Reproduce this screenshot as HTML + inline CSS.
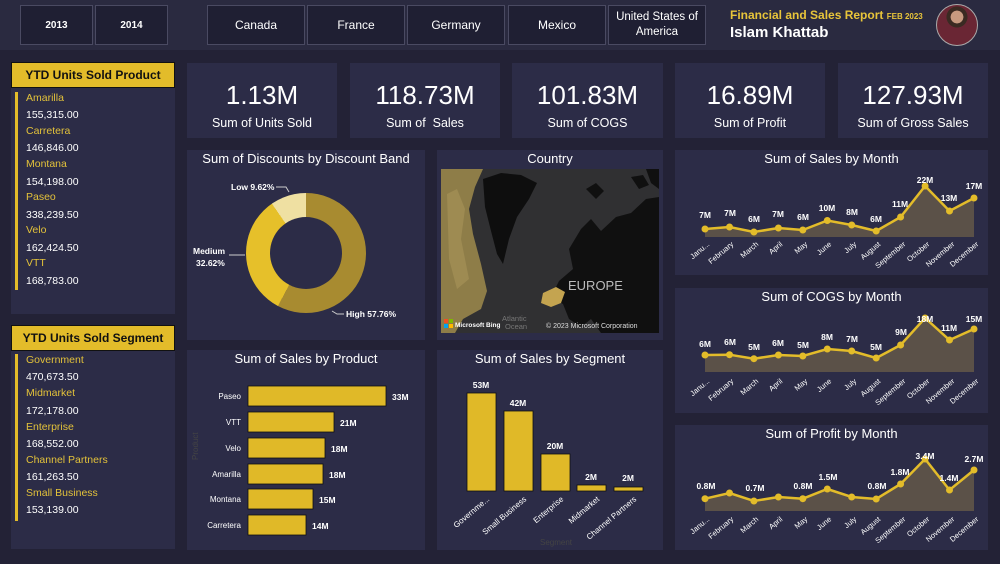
<!DOCTYPE html>
<html><head><meta charset="utf-8"><style>
*{margin:0;padding:0;box-sizing:border-box}
body{width:1000px;height:564px;background:#232236;font-family:"Liberation Sans","DejaVu Sans",sans-serif;position:relative;overflow:hidden;color:#fff}
.a{position:absolute}
.hdr{left:0;top:0;width:1000px;height:50px;background:#2a2a40}
.btn{position:absolute;border:1px solid #4a4a62;background:#1f1f33;color:#fff;display:flex;align-items:center;justify-content:center;text-align:center;font-size:12px;line-height:15px}
.yr{font-weight:bold;font-size:10px}
.p{position:absolute;background:#2c2c47}
.kv{position:absolute;left:0;right:0;text-align:center;top:17px;font-size:26px;color:#fff}
.kl{position:absolute;left:0;right:0;text-align:center;top:53px;font-size:12.5px;color:#fff}
.ttl{position:absolute;left:0;right:0;text-align:center;top:1px;font-size:13px;color:#fff}
.yh{position:absolute;background:#e3bc2a;color:#111;font-weight:bold;font-size:12px;display:flex;align-items:center;justify-content:center;border:1px solid #111}
.li{position:absolute;left:26px;font-size:10.5px}
.nm{color:#e3c23a}
</style></head><body>
<div class="a hdr"></div>
<div class="btn yr" style="left:20px;top:5px;width:73px;height:40px">2013</div>
<div class="btn yr" style="left:95px;top:5px;width:73px;height:40px">2014</div>
<div class="btn" style="left:207px;top:5px;width:98px;height:40px">Canada</div>
<div class="btn" style="left:307px;top:5px;width:98px;height:40px">France</div>
<div class="btn" style="left:407px;top:5px;width:98px;height:40px">Germany</div>
<div class="btn" style="left:508px;top:5px;width:98px;height:40px">Mexico</div>
<div class="btn" style="left:608px;top:5px;width:98px;height:40px;font-size:11.5px">United States of<br>America</div>
<div class="a" style="left:730px;top:8px;font-size:12px;font-weight:bold;color:#e8c53a">Financial and Sales Report <span style="font-size:8px">FEB 2023</span></div>
<div class="a" style="left:730px;top:24px;font-size:15px;font-weight:bold;color:#fff">Islam Khattab</div>
<div class="a" style="left:936px;top:4px;width:42px;height:42px;border-radius:50%;background:radial-gradient(circle at 50% 30%,#c79a80 0 18%,#3a2a22 19% 30%,#6a2634 31%);border:1px solid #aaa"></div>

<div class="p" style="left:11px;top:62px;width:164px;height:252px"></div>
<div class="yh" style="left:11px;top:62px;width:164px;height:26px">YTD Units Sold Product</div>
<div class="a" style="left:15px;top:92px;width:3px;height:198px;background:#e3bc2a"></div>
<div class="li nm" style="top:92px">Amarilla</div><div class="li" style="top:109px">155,315.00</div>
<div class="li nm" style="top:125px">Carretera</div><div class="li" style="top:142px">146,846.00</div>
<div class="li nm" style="top:158px">Montana</div><div class="li" style="top:176px">154,198.00</div>
<div class="li nm" style="top:191px">Paseo</div><div class="li" style="top:209px">338,239.50</div>
<div class="li nm" style="top:224px">Velo</div><div class="li" style="top:242px">162,424.50</div>
<div class="li nm" style="top:257px">VTT</div><div class="li" style="top:275px">168,783.00</div>

<div class="p" style="left:11px;top:325px;width:164px;height:224px"></div>
<div class="yh" style="left:11px;top:325px;width:164px;height:26px">YTD Units Sold Segment</div>
<div class="a" style="left:15px;top:354px;width:3px;height:167px;background:#e3bc2a"></div>
<div class="li nm" style="top:354px">Government</div><div class="li" style="top:371px">470,673.50</div>
<div class="li nm" style="top:387px">Midmarket</div><div class="li" style="top:405px">172,178.00</div>
<div class="li nm" style="top:421px">Enterprise</div><div class="li" style="top:438px">168,552.00</div>
<div class="li nm" style="top:454px">Channel Partners</div><div class="li" style="top:471px">161,263.50</div>
<div class="li nm" style="top:487px">Small Business</div><div class="li" style="top:504px">153,139.00</div>

<div class="p" style="left:187px;top:63px;width:150px;height:75px"><div class="kv">1.13M</div><div class="kl">Sum of Units Sold</div></div>
<div class="p" style="left:350px;top:63px;width:150px;height:75px"><div class="kv">118.73M</div><div class="kl">Sum of &nbsp;Sales</div></div>
<div class="p" style="left:512px;top:63px;width:151px;height:75px"><div class="kv">101.83M</div><div class="kl">Sum of COGS</div></div>
<div class="p" style="left:675px;top:63px;width:150px;height:75px"><div class="kv">16.89M</div><div class="kl">Sum of Profit</div></div>
<div class="p" style="left:838px;top:63px;width:150px;height:75px"><div class="kv">127.93M</div><div class="kl">Sum of Gross Sales</div></div>

<div class="p" style="left:187px;top:150px;width:238px;height:190px"><div class="ttl">Sum of Discounts by Discount Band</div></div>
<div class="a" style="left:246px;top:193px;width:120px;height:120px;border-radius:50%;background:conic-gradient(#a88b30 0 57.76%,#e6c02a 57.76% 90.38%,#efe0a2 90.38% 100%)"></div>
<div class="a" style="left:270px;top:217px;width:72px;height:72px;border-radius:50%;background:#2c2c47"></div>
<svg class="a" style="left:0;top:0" width="1000" height="564">
<g stroke="#ccc" stroke-width="1" fill="none"><path d="M276 187h10l3 5"/><path d="M229 255h16"/><path d="M332 311l5 3h7"/></g>
<g fill="#fff" font-size="8.5" font-weight="bold" font-family="Liberation Sans,sans-serif">
<text x="231" y="190">Low 9.62%</text><text x="193" y="254">Medium</text><text x="196" y="266">32.62%</text><text x="346" y="317">High 57.76%</text></g>
</svg>

<div class="p" style="left:437px;top:150px;width:226px;height:190px"><div class="ttl">Country</div></div>
<svg class="a" style="left:441px;top:169px" width="218" height="164">
<rect width="218" height="164" fill="#303032"/>
<path d="M0 0H42L34 18 28 40 32 65 40 95 46 122 40 140 22 150 14 164H0Z" fill="#8e7d48"/>
<path d="M6 25l10-5 8 20-4 30 8 40-12 10-8-30z" fill="#a8955a" opacity=".6"/>
<path d="M42 10 60 4 80 6 96 14 88 30 76 48 68 70 62 95 56 85 50 62 44 38Z" fill="#0e0e0e"/>
<path d="M140 60 150 50 160 62 175 48 190 44 205 30 218 28V164H160L150 150 140 158 128 150 122 135 110 128 118 112 132 100 128 80Z" fill="#101010"/>
<path d="M145 20l10-6 8 8-8 8z M190 8l12 -2 6 10-10 4z M205 0h13v20l-8-6z" fill="#101010"/>
<path d="M102 124 115 118 124 123 120 134 110 138 100 134Z" fill="#c4a450"/>
<text x="127" y="121" fill="#bbb" font-size="13" font-family="Liberation Sans,sans-serif">EUROPE</text>
<text x="61" y="152" fill="#777" font-size="7.5" font-family="Liberation Sans,sans-serif">Atlantic</text>
<text x="64" y="160" fill="#777" font-size="7.5" font-family="Liberation Sans,sans-serif">Ocean</text>
<rect x="3" y="150" width="4" height="4" fill="#f25022"/><rect x="8" y="150" width="4" height="4" fill="#7fba00"/><rect x="3" y="155" width="4" height="4" fill="#00a4ef"/><rect x="8" y="155" width="4" height="4" fill="#ffb900"/>
<text x="14" y="158" fill="#fff" font-size="6.5" font-weight="bold" font-family="Liberation Sans,sans-serif">Microsoft Bing</text>
<text x="105" y="159" fill="#ddd" font-size="7" font-family="Liberation Sans,sans-serif">© 2023 Microsoft Corporation</text>
</svg>

<div class="p" style="left:187px;top:350px;width:238px;height:200px"><div class="ttl">Sum of Sales by Product</div></div>
<div class="p" style="left:437px;top:350px;width:226px;height:200px"><div class="ttl">Sum of Sales by Segment</div></div>
<div class="p" style="left:675px;top:150px;width:313px;height:125px"><div class="ttl">Sum of Sales by Month</div></div>
<div class="p" style="left:675px;top:288px;width:313px;height:125px"><div class="ttl">Sum of COGS by Month</div></div>
<div class="p" style="left:675px;top:425px;width:313px;height:125px"><div class="ttl">Sum of Profit by Month</div></div>

<svg class="a" style="left:0;top:0" width="1000" height="564" font-family="Liberation Sans,sans-serif">
<g fill="#e0b928" stroke="#111" stroke-width="0.8">
<rect x="248" y="386" width="138" height="20"/><rect x="248" y="412" width="86" height="20"/><rect x="248" y="438" width="77" height="20"/><rect x="248" y="464" width="75" height="20"/><rect x="248" y="489" width="65" height="20"/><rect x="248" y="515" width="58" height="20"/>
<rect x="467" y="393" width="29" height="98"/><rect x="504" y="411" width="29" height="80"/><rect x="541" y="454" width="29" height="37"/><rect x="577" y="485" width="29" height="6"/><rect x="614" y="487" width="29" height="4"/>
</g>
<g fill="#fff" font-size="8" text-anchor="end">
<text x="241" y="399">Paseo</text><text x="241" y="425">VTT</text><text x="241" y="451">Velo</text><text x="241" y="477">Amarilla</text><text x="241" y="502">Montana</text><text x="241" y="528">Carretera</text></g>
<g fill="#fff" font-size="8.5" font-weight="bold">
<text x="392" y="400">33M</text><text x="340" y="426">21M</text><text x="331" y="452">18M</text><text x="329" y="478">18M</text><text x="319" y="503">15M</text><text x="312" y="529">14M</text></g>
<text x="198" y="460" fill="#444" font-size="8" transform="rotate(-90 198 460)">Product</text>
<g fill="#fff" font-size="8.5" font-weight="bold" text-anchor="middle">
<text x="481" y="388">53M</text><text x="518" y="406">42M</text><text x="555" y="449">20M</text><text x="591" y="480">2M</text><text x="628" y="481">2M</text></g>
<g fill="#fff" font-size="8" text-anchor="end">
<text transform="translate(490,500) rotate(-40)">Governme...</text>
<text transform="translate(527,500) rotate(-40)">Small Business</text>
<text transform="translate(564,500) rotate(-40)">Enterprise</text>
<text transform="translate(600,500) rotate(-40)">Midmarket</text>
<text transform="translate(637,500) rotate(-40)">Channel Partners</text></g>
<text x="540" y="545" fill="#444" font-size="8">Segment</text>

<path d="M705 229L729.5 227 753.9 232 778.4 228 802.8 230 827.3 220.5 851.7 225 876.2 231 900.6 217 925.1 186 949.5 211 974 198V237H705Z" fill="#5b5148"/>
<polyline points="705,229 729.5,227 753.9,232 778.4,228 802.8,230 827.3,220.5 851.7,225 876.2,231 900.6,217 925.1,186 949.5,211 974,198" fill="none" stroke="#e3bc2a" stroke-width="2.5"/>
<g fill="#e3bc2a"><circle cx="705" cy="229" r="3.5"/><circle cx="729.5" cy="227" r="3.5"/><circle cx="753.9" cy="232" r="3.5"/><circle cx="778.4" cy="228" r="3.5"/><circle cx="802.8" cy="230" r="3.5"/><circle cx="827.3" cy="220.5" r="3.5"/><circle cx="851.7" cy="225" r="3.5"/><circle cx="876.2" cy="231" r="3.5"/><circle cx="900.6" cy="217" r="3.5"/><circle cx="925.1" cy="186" r="3.5"/><circle cx="949.5" cy="211" r="3.5"/><circle cx="974" cy="198" r="3.5"/></g>
<g fill="#fff" font-size="8.5" font-weight="bold" text-anchor="middle">
<text x="705" y="218">7M</text><text x="730" y="216">7M</text><text x="754" y="222">6M</text><text x="778" y="217">7M</text><text x="803" y="220">6M</text><text x="827" y="211">10M</text><text x="852" y="215">8M</text><text x="876" y="222">6M</text><text x="900" y="207">11M</text><text x="925" y="183">22M</text><text x="949" y="201">13M</text><text x="974" y="189">17M</text></g>

<path d="M705 355L729.5 354.7 753.9 358.7 778.4 355 802.8 356 827.3 349 851.7 351 876.2 358 900.6 345 925.1 318 949.5 340 974 329V372H705Z" fill="#5b5148"/>
<polyline points="705,355 729.5,354.7 753.9,358.7 778.4,355 802.8,356 827.3,349 851.7,351 876.2,358 900.6,345 925.1,318 949.5,340 974,329" fill="none" stroke="#e3bc2a" stroke-width="2.5"/>
<g fill="#e3bc2a"><circle cx="705" cy="355" r="3.5"/><circle cx="729.5" cy="354.7" r="3.5"/><circle cx="753.9" cy="358.7" r="3.5"/><circle cx="778.4" cy="355" r="3.5"/><circle cx="802.8" cy="356" r="3.5"/><circle cx="827.3" cy="349" r="3.5"/><circle cx="851.7" cy="351" r="3.5"/><circle cx="876.2" cy="358" r="3.5"/><circle cx="900.6" cy="345" r="3.5"/><circle cx="925.1" cy="318" r="3.5"/><circle cx="949.5" cy="340" r="3.5"/><circle cx="974" cy="329" r="3.5"/></g>
<g fill="#fff" font-size="8.5" font-weight="bold" text-anchor="middle">
<text x="705" y="347">6M</text><text x="730" y="345">6M</text><text x="754" y="350">5M</text><text x="778" y="346">6M</text><text x="803" y="348">5M</text><text x="827" y="340">8M</text><text x="852" y="342">7M</text><text x="876" y="350">5M</text><text x="901" y="335">9M</text><text x="925" y="322">18M</text><text x="949" y="331">11M</text><text x="974" y="322">15M</text></g>

<path d="M705 498.7L729.5 493 753.9 501 778.4 497 802.8 498.7 827.3 489 851.7 497 876.2 499 900.6 484 925.1 459 949.5 490 974 470V511H705Z" fill="#5b5148"/>
<polyline points="705,498.7 729.5,493 753.9,501 778.4,497 802.8,498.7 827.3,489 851.7,497 876.2,499 900.6,484 925.1,459 949.5,490 974,470" fill="none" stroke="#e3bc2a" stroke-width="2.5"/>
<g fill="#e3bc2a"><circle cx="705" cy="498.7" r="3.5"/><circle cx="729.5" cy="493" r="3.5"/><circle cx="753.9" cy="501" r="3.5"/><circle cx="778.4" cy="497" r="3.5"/><circle cx="802.8" cy="498.7" r="3.5"/><circle cx="827.3" cy="489" r="3.5"/><circle cx="851.7" cy="497" r="3.5"/><circle cx="876.2" cy="499" r="3.5"/><circle cx="900.6" cy="484" r="3.5"/><circle cx="925.1" cy="459" r="3.5"/><circle cx="949.5" cy="490" r="3.5"/><circle cx="974" cy="470" r="3.5"/></g>
<g fill="#fff" font-size="8.5" font-weight="bold" text-anchor="middle">
<text x="706" y="489">0.8M</text><text x="755" y="491">0.7M</text><text x="803" y="489">0.8M</text><text x="828" y="480">1.5M</text><text x="877" y="489">0.8M</text><text x="900" y="475">1.8M</text><text x="925" y="459">3.4M</text><text x="949" y="481">1.4M</text><text x="974" y="462">2.7M</text></g>

<g fill="#fff" font-size="7.5" text-anchor="end">
<g>
<text transform="translate(710,245) rotate(-40)">Janu...</text><text transform="translate(734,245) rotate(-40)">February</text><text transform="translate(759,245) rotate(-40)">March</text><text transform="translate(783,245) rotate(-40)">April</text><text transform="translate(808,245) rotate(-40)">May</text><text transform="translate(832,245) rotate(-40)">June</text><text transform="translate(857,245) rotate(-40)">July</text><text transform="translate(881,245) rotate(-40)">August</text><text transform="translate(906,245) rotate(-40)">September</text><text transform="translate(930,245) rotate(-40)">October</text><text transform="translate(955,245) rotate(-40)">November</text><text transform="translate(979,245) rotate(-40)">December</text></g>
<g transform="translate(0,137)">
<text transform="translate(710,245) rotate(-40)">Janu...</text><text transform="translate(734,245) rotate(-40)">February</text><text transform="translate(759,245) rotate(-40)">March</text><text transform="translate(783,245) rotate(-40)">April</text><text transform="translate(808,245) rotate(-40)">May</text><text transform="translate(832,245) rotate(-40)">June</text><text transform="translate(857,245) rotate(-40)">July</text><text transform="translate(881,245) rotate(-40)">August</text><text transform="translate(906,245) rotate(-40)">September</text><text transform="translate(930,245) rotate(-40)">October</text><text transform="translate(955,245) rotate(-40)">November</text><text transform="translate(979,245) rotate(-40)">December</text></g>
<g transform="translate(0,275)">
<text transform="translate(710,245) rotate(-40)">Janu...</text><text transform="translate(734,245) rotate(-40)">February</text><text transform="translate(759,245) rotate(-40)">March</text><text transform="translate(783,245) rotate(-40)">April</text><text transform="translate(808,245) rotate(-40)">May</text><text transform="translate(832,245) rotate(-40)">June</text><text transform="translate(857,245) rotate(-40)">July</text><text transform="translate(881,245) rotate(-40)">August</text><text transform="translate(906,245) rotate(-40)">September</text><text transform="translate(930,245) rotate(-40)">October</text><text transform="translate(955,245) rotate(-40)">November</text><text transform="translate(979,245) rotate(-40)">December</text></g>
</g>
</svg>
</body></html>
